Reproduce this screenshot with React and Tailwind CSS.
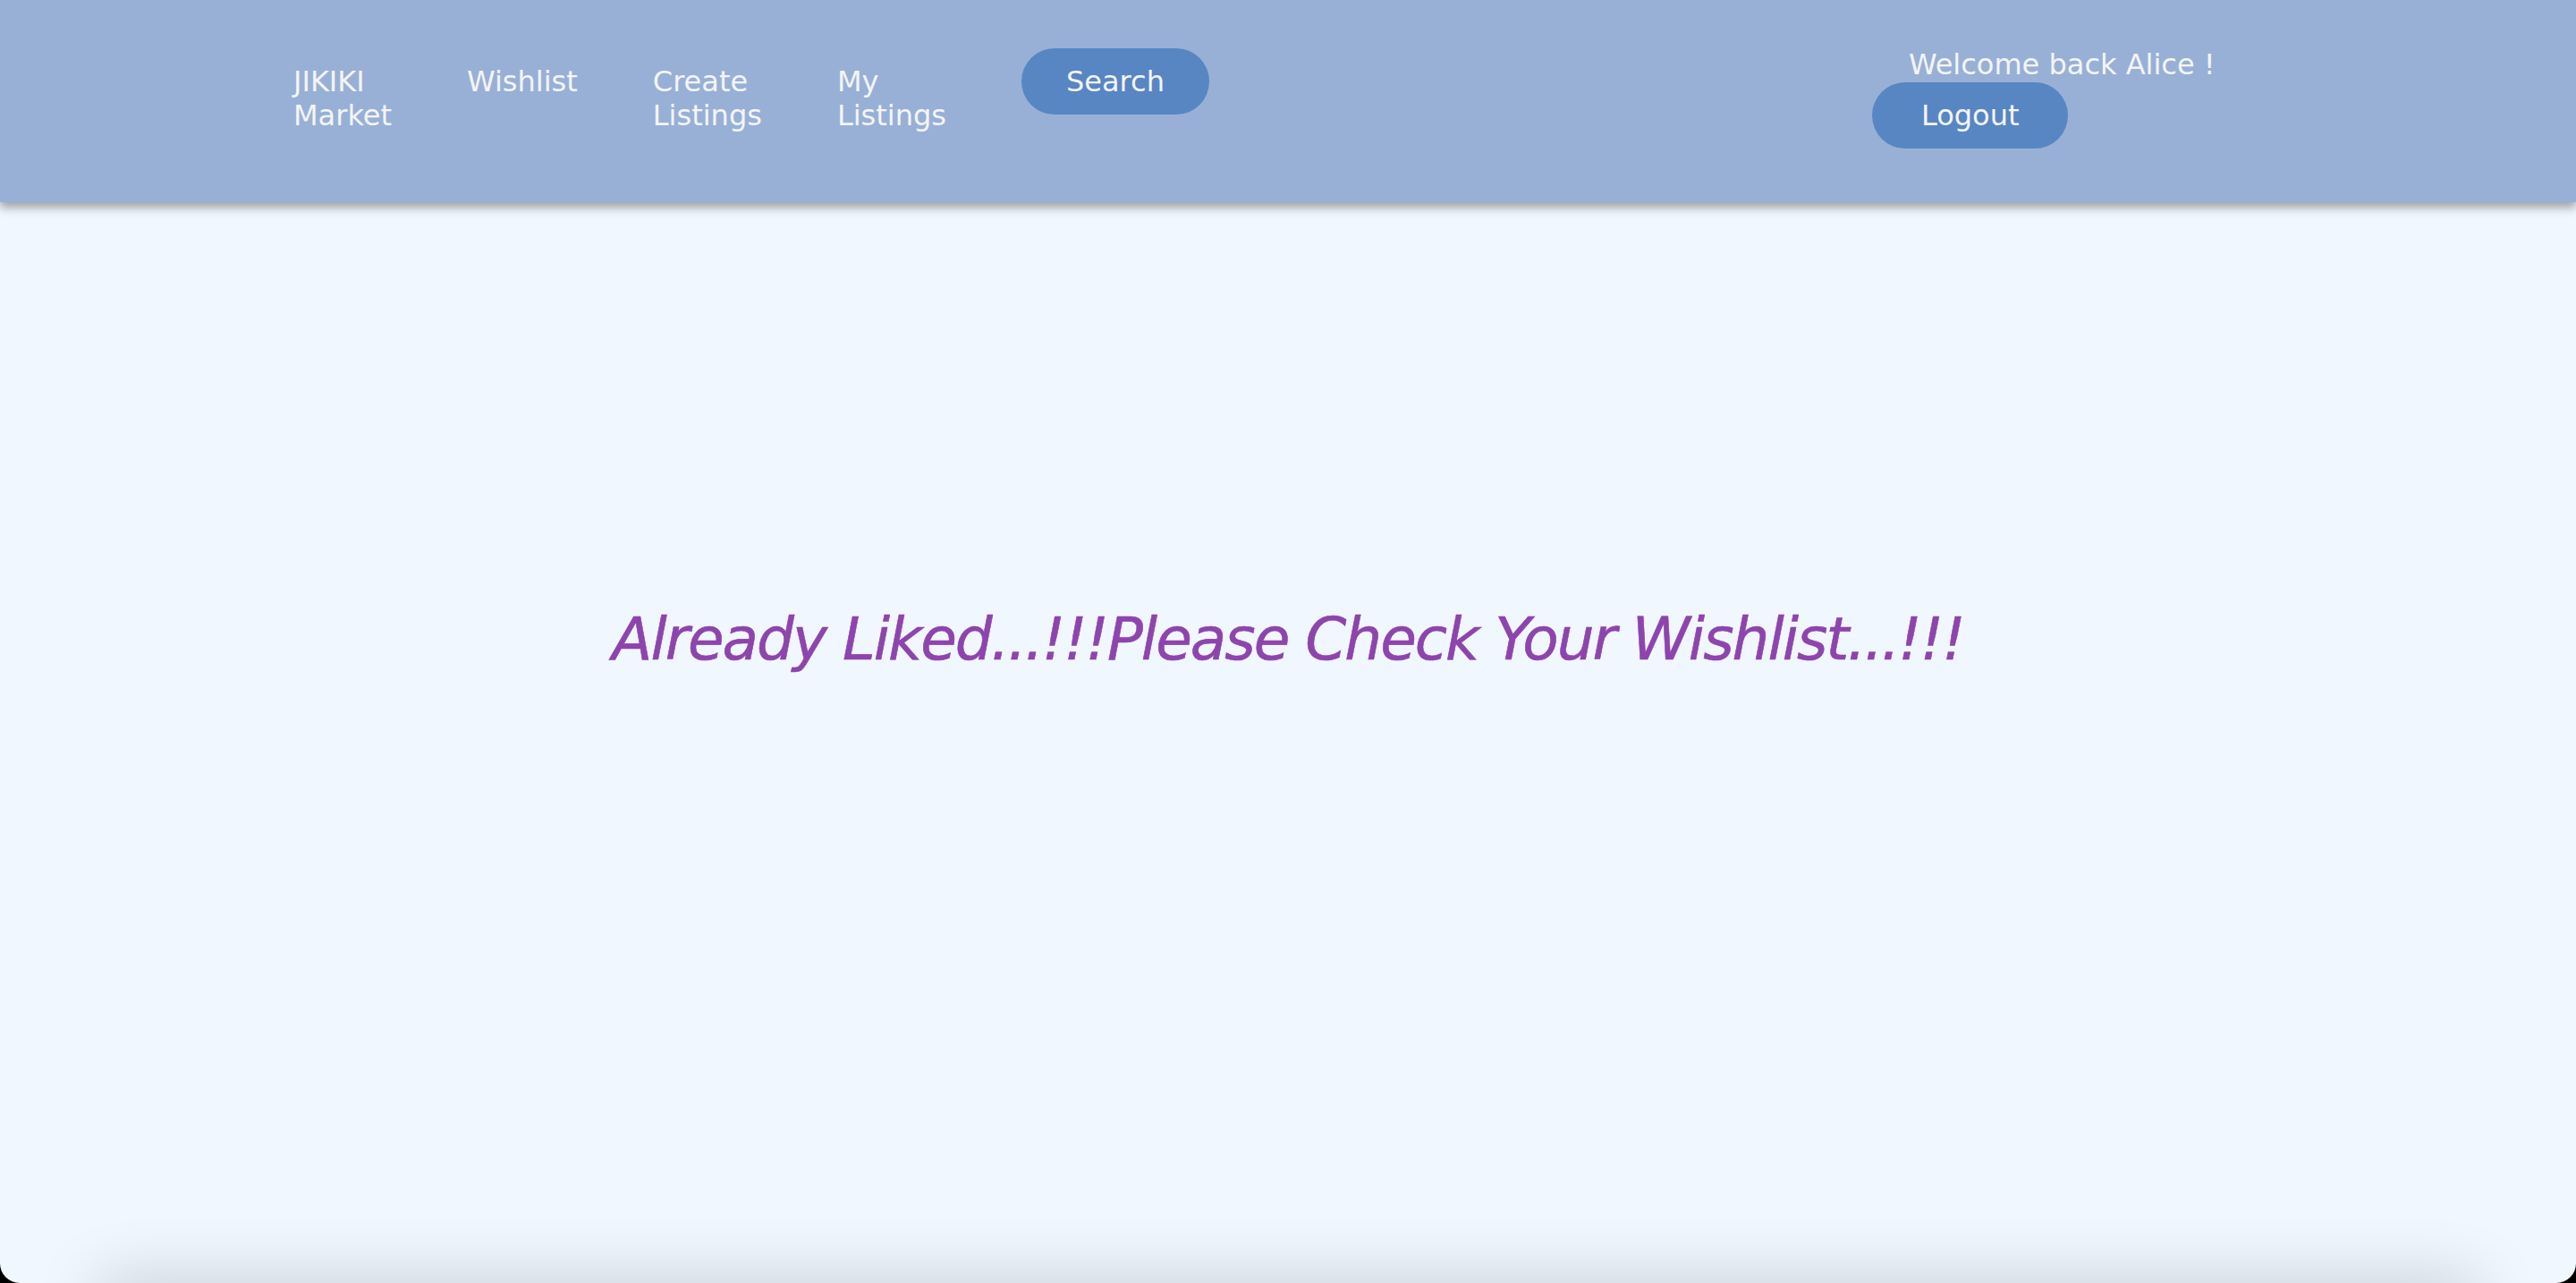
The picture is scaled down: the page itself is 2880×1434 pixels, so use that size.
const NAV_LINKS = [
  ["JIKIKI", "Market"],
  ["Wishlist"],
  ["Create", "Listings"],
  ["My", "Listings"],
];

const font = { fontFamily: '"DejaVu Sans", "Liberation Sans", sans-serif' };

const NavBar = ({ user }) => (
  <header className="relative z-10 flex h-[226px] shrink-0 items-start bg-[#98b0d6] pl-[328px] pt-[53px] shadow-[0_6px_10px_rgba(0,0,0,0.35)]">
    <nav className="flex items-baseline gap-[84px] pt-[1px]">
      {NAV_LINKS.map((lines) => (
        <a key={lines.join(" ")} className="block text-[32px] leading-[38px] text-[#f4f4f4]">
          {lines.map((line) => (
            <span key={line} className="block">
              {line}
            </span>
          ))}
        </a>
      ))}
      <button className="rounded-full bg-[#5886c3] px-[50px] py-[18px] text-[32px] leading-[38px] text-[#f4f4f4]">
        Search
      </button>
    </nav>
    <div className="ml-[741px] flex flex-col items-start">
      <span className="ml-[41px] text-[32px] leading-[38px] text-[#f4f4f4]">
        Welcome back {user} !
      </span>
      <button className="mt-[1px] rounded-full bg-[#5886c3] px-[55px] py-[18px] text-[32px] leading-[38px] text-[#f4f4f4]">
        Logout
      </button>
    </div>
  </header>
);

export default function App() {
  return (
    <div className="h-[1434px] overflow-hidden bg-black" style={font}>
      <div className="flex h-full flex-col overflow-hidden rounded-b-[22px] bg-[#f0f7ff]">
        <NavBar user="Alice" />
        <main className="h-[1208px] shrink-0 pt-[449px] text-center">
          <h2 className="text-[66px] leading-[1.2] tracking-[-2px] italic text-[#8e44ad] [-webkit-text-stroke:0.6px_#8e44ad]">
            Already Liked...!!!Please Check Your Wishlist...!!!
          </h2>
        </main>
        <footer className="mx-[110px] h-[40px] shrink-0 bg-[#f0f7ff] shadow-[0_0_70px_rgba(0,0,0,0.22)]" />
      </div>
    </div>
  );
}
